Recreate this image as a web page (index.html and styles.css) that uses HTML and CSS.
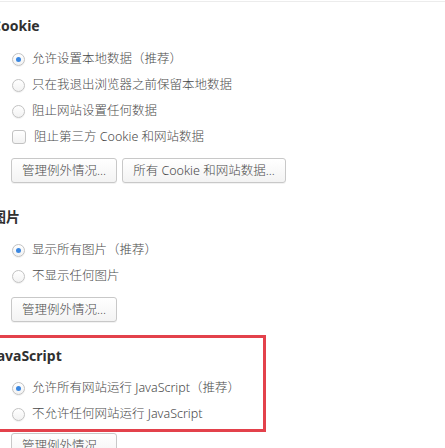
FILE: index.html
```html
<!DOCTYPE html>
<html lang="zh-CN">
<head>
<meta charset="utf-8">
<title>内容设置</title>
<link rel="stylesheet" href="styles.css">
</head>
<body>
<div class="topline"></div>
<div class="page">
  <section class="section">
    <h3 class="heading">Cookie</h3>
    <div class="options">
      <label class="option"><input type="radio" name="cookie" class="radio" checked><span>允许设置本地数据（推荐）</span></label>
      <label class="option"><input type="radio" name="cookie" class="radio"><span>只在我退出浏览器之前保留本地数据</span></label>
      <label class="option"><input type="radio" name="cookie" class="radio"><span>阻止网站设置任何数据</span></label>
      <label class="option"><input type="checkbox" class="check"><span>阻止第三方 Cookie 和网站数据</span></label>
    </div>
    <div class="buttons">
      <button class="btn">管理例外情况...</button>
      <button class="btn">所有 Cookie 和网站数据...</button>
    </div>
  </section>

  <section class="section">
    <h3 class="heading">图片</h3>
    <div class="options">
      <label class="option"><input type="radio" name="img" class="radio" checked><span>显示所有图片（推荐）</span></label>
      <label class="option"><input type="radio" name="img" class="radio"><span>不显示任何图片</span></label>
    </div>
    <div class="buttons">
      <button class="btn">管理例外情况...</button>
    </div>
  </section>

  <section class="section">
    <div class="highlight">
      <h3 class="heading">JavaScript</h3>
      <div class="options">
        <label class="option"><input type="radio" name="js" class="radio" checked><span>允许所有网站运行 JavaScript（推荐）</span></label>
        <label class="option"><input type="radio" name="js" class="radio"><span>不允许任何网站运行 JavaScript</span></label>
      </div>
    </div>
    <div class="buttons after-box">
      <button class="btn">管理例外情况...</button>
    </div>
  </section>
</div>
</body>
</html>
```

FILE: styles.css
```css
html, body {
  margin: 0;
  padding: 0;
  background: #ffffff;
  overflow: hidden;
}

body {
  font-family: "Noto Sans", "Noto Sans CJK SC", sans-serif;
  font-size: 12.5px;
  font-weight: 300;
  color: #4a4a4a;
}

.topline {
  height: 1px;
  margin-top: 1px;
  background: #ececec;
}

.page {
  margin-left: -8px;
}

.heading {
  margin: 15px 0 0 0;
  font-size: 14px;
  line-height: 18px;
  font-weight: bold;
  color: #303030;
}

.section + .section .heading {
  margin-top: 25px;
}

.options {
  margin-top: 11px;
  padding-left: 20px;
  display: flex;
  flex-direction: column;
}

.option {
  display: flex;
  align-items: center;
  height: 26px;
  line-height: 26px;
  white-space: nowrap;
}

.radio {
  appearance: none;
  -webkit-appearance: none;
  margin: 0 7px 0 0;
  width: 13px;
  height: 13px;
  flex: none;
  border: 1px solid #c2c2c2;
  border-radius: 50%;
  background: linear-gradient(#ffffff, #f2f2f2);
  box-shadow: 0 1px 1px rgba(0, 0, 0, 0.06);
  box-sizing: border-box;
  position: relative;
}

.radio:checked::after {
  content: "";
  position: absolute;
  left: 3px;
  top: 3px;
  width: 5px;
  height: 5px;
  border-radius: 50%;
  background: #3b87e0;
}

.check {
  appearance: none;
  -webkit-appearance: none;
  margin: 0 8px 0 0;
  width: 14px;
  height: 14px;
  flex: none;
  border: 1px solid #c2c2c2;
  border-radius: 3px;
  background: linear-gradient(#ffffff, #f2f2f2);
  box-sizing: border-box;
}

.buttons {
  display: flex;
  gap: 5px;
  margin-top: 8px;
  padding-left: 19px;
}

.btn {
  height: 25px;
  padding: 0 10px;
  font-family: "Noto Sans", "Noto Sans CJK SC", sans-serif;
  font-size: 12.5px;
  font-weight: 300;
  line-height: 23px;
  color: #4a4a4a;
  background: linear-gradient(#ffffff, #f3f3f3);
  border: 1px solid #c8c8c8;
  border-radius: 3px;
  box-shadow: 0 1px 0 rgba(0, 0, 0, 0.05);
  white-space: nowrap;
}

.highlight {
  margin-top: 13px;
  margin-left: -15px;
  width: 289px;
  box-sizing: border-box;
  border: 3px solid #e3414b;
  padding: 0 0 2px 12px;
}

.highlight .heading {
  margin-top: 9px;
}

.section + .section .highlight .heading {
  margin-top: 9px;
}

.highlight .options {
  margin-top: 10px;
  padding-left: 20px;
}

.buttons.after-box {
  margin-top: 1px;
}
```
